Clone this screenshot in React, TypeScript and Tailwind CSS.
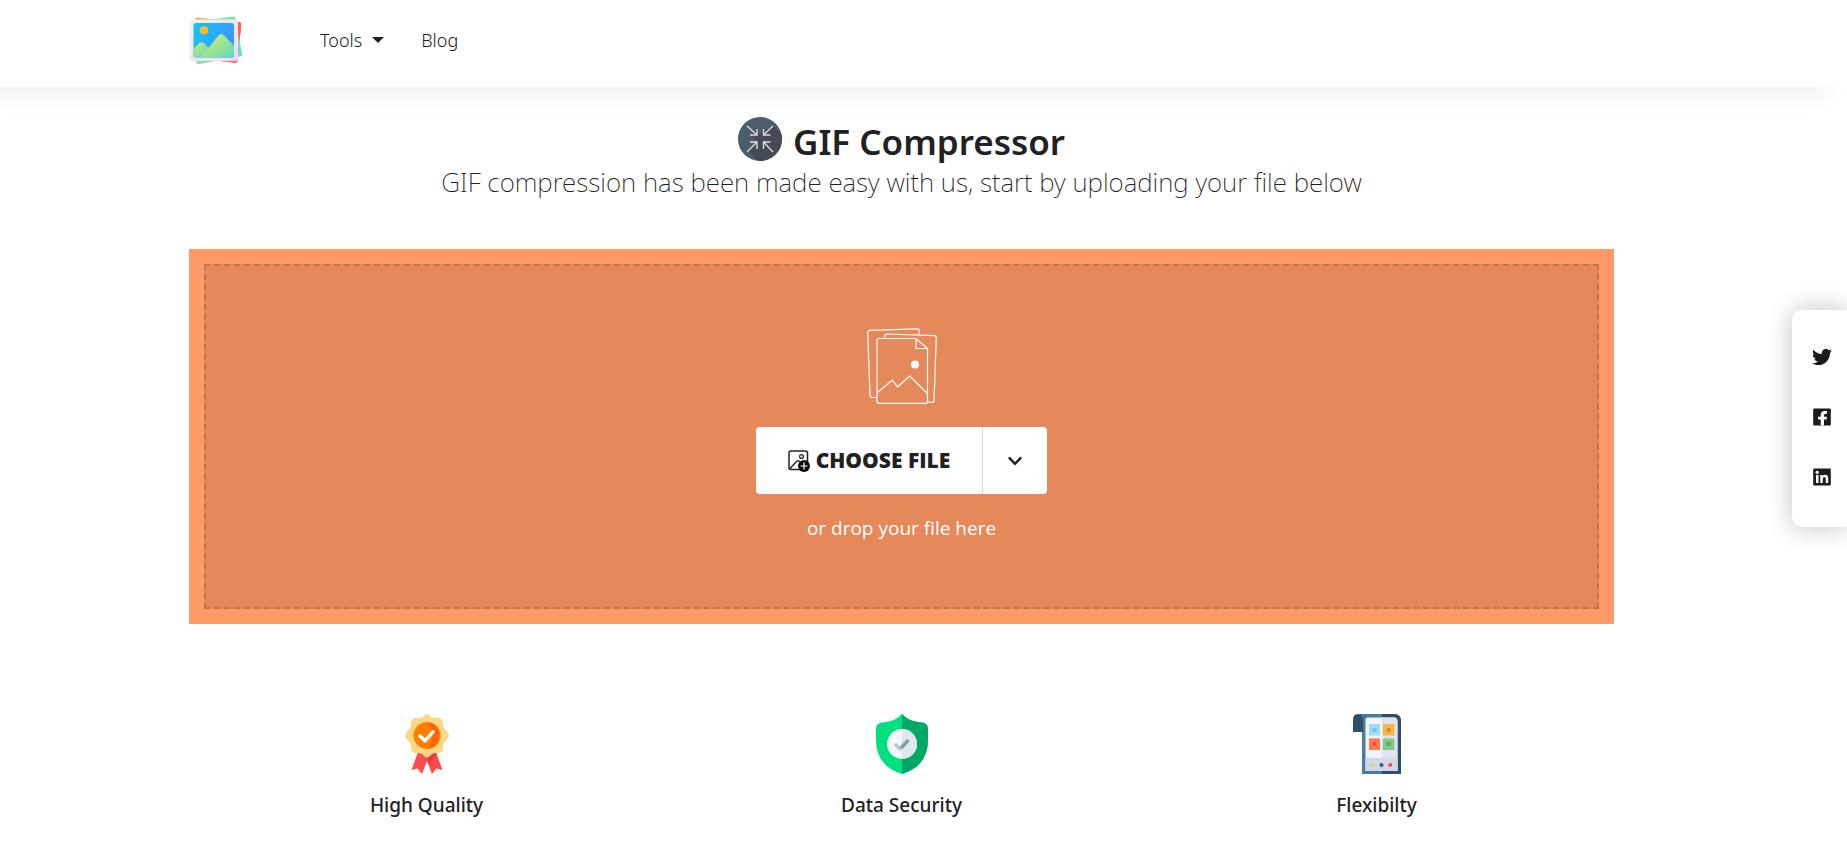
import { FaTwitter, FaChevronDown } from "react-icons/fa";

function Logo() {
  return (
    <svg viewBox="0 0 54 50" className="h-[50px] w-[54px]" aria-hidden="true">
      <defs>
        <linearGradient id="sky" x1="0" y1="0" x2="1" y2="0.4">
          <stop offset="0" stopColor="#12c6fb" />
          <stop offset="1" stopColor="#3a98fb" />
        </linearGradient>
        <linearGradient id="hill" x1="0" y1="0" x2="1" y2="1">
          <stop offset="0" stopColor="#d2ee60" />
          <stop offset="0.35" stopColor="#b4e880" />
          <stop offset="1" stopColor="#5cd8c4" />
        </linearGradient>
        <linearGradient id="frame" x1="0" y1="0" x2="1" y2="1">
          <stop offset="0" stopColor="#f1f3fb" />
          <stop offset="1" stopColor="#eed8f8" />
        </linearGradient>
        <linearGradient id="backRed" x1="0" y1="0" x2="1" y2="1">
          <stop offset="0" stopColor="#ffb13d" />
          <stop offset="0.6" stopColor="#f2693f" />
          <stop offset="1" stopColor="#ff5a5f" />
        </linearGradient>
        <linearGradient id="backGreen" x1="0" y1="0" x2="1" y2="1">
          <stop offset="0" stopColor="#a5e59b" />
          <stop offset="1" stopColor="#5cdcc4" />
        </linearGradient>
      </defs>
      <path d="M6.500 2.500 50.500 7q2 .3 1.800 2L48.500 46q-.4 2-2.400 1.800L5 42Z" fill="url(#backRed)" />
      <path d="M20 4.700 44 1.500q2-.3 2.400 1.700L53 39q.2 2-1.700 2.400L10 49q-2 .3-2.500-1.800L5 40Z" fill="url(#backGreen)" />
      <path d="M47.500 7 50.500 7.400q2 .3 1.800 2L50.500 27Z" fill="#fa6646" />
      <path d="m49 40-.6 6q-.4 2-2.400 1.800L24 45.500Z" fill="#ff6969" />
      <rect x="0.500" y="4.500" width="48.500" height="41.500" rx="3" fill="url(#frame)" />
      <rect x="4.500" y="8" width="40.500" height="34.500" rx="2.500" fill="url(#sky)" />
      <circle cx="15" cy="15.300" r="4.300" fill="#fdb72c" />
      <path d="M4.500 34q3-3 5-5.500 3-2.500 6 0l4.500 5-8.500 9H7Q4.500 42.500 4.500 40Z" fill="url(#hill)" opacity=".9" />
      <path d="M11.500 42.500 29.500 20.500q2.800-3 5.600 0l9.900 10.500v9q0 2.500-2.500 2.500Z" fill="url(#hill)" />
    </svg>
  );
}

function CompressIcon() {
  return (
    <svg viewBox="0 0 44 44" className="size-11" aria-hidden="true">
      <defs>
        <clipPath id="disc"><circle cx="22" cy="22" r="22" /></clipPath>
      </defs>
      <circle cx="22" cy="22" r="22" fill="#4c5c69" />
      <path clipPath="url(#disc)" d="M13 18 19 11 19 18 35 9 44 18V44H20L10 34 19 25Z" fill="#444b55" />
      <g fill="none" stroke="#d9dbdd" strokeWidth="1.400">
        <path d="m9 9 10 9m-7 0h7v-6M35 9l-9.500 9m0-6v6h7M9 35l10-10m-7 0h7v7M35 35l-9.500-10m7 0h-7v7" />
      </g>
    </svg>
  );
}

function PicturesIcon() {
  return (
    <svg viewBox="0 0 70 76" className="h-[76px] w-[70px]" fill="none" stroke="#fff" strokeWidth="1.200" strokeLinejoin="round" aria-hidden="true">
      <path d="M10 69.500H5q-1.900 0-2-2L.7 4.500Q.6 2.500 2.500 2.300L50 .8q2-.1 2 1.800v4" />
      <path d="M18 9.500V8q0-2 2-2l47.400 1.700q2 .1 1.900 2L67 72.500q-.1 2-2 1.900L60.500 74" />
      <path d="M49 10.500H12q-2 0-2 2V73q0 2.300 2 2.300h46.500q2 0 2-2V20.500Zm0 0v10h11.500" />
      <path d="m10 65 15.500-13 5 7L42.700 48 60.500 65.500" />
      <circle cx="48" cy="36.500" r="4" fill="#fff" stroke="none" />
    </svg>
  );
}

function AddImageIcon() {
  return (
    <svg viewBox="0 0 22 22" className="size-[22px]" fill="none" aria-hidden="true">
      <rect x="1" y="1" width="18.500" height="18.500" rx="2" stroke="#222" strokeWidth="1.500" />
      <circle cx="13.500" cy="6.500" r="1.900" stroke="#222" strokeWidth="1.300" />
      <path d="m1.500 19 7.500-8q1.500-1 3 1" stroke="#222" strokeWidth="1.500" />
      <circle cx="16" cy="16" r="6" fill="#0b0b0b" />
      <path d="M16 12.500v7M12.500 16h7" stroke="#fff" strokeWidth="1.200" />
    </svg>
  );
}

function MedalIcon() {
  return (
    <svg viewBox="0 0 60 60" className="size-[60px]" aria-hidden="true">
      <path d="M21 38 14.500 56l6-1.500 4.500 5.500 5-13V40Z" fill="#ff4b4b" />
      <path d="m39 38 6.500 18-6-1.500-4.500 5.500-5-13V40Z" fill="#ff4b4b" />
      <path d="M30 43.500q5-5 9.500-4.500l.5 1-8 10-2-4Z" fill="#ee373c" />
      <path d="M30 0q2.500 0 4 2.500Q35.500 4 37.500 3.800 42.500 3 45 6q1.500 2 1 5-.3 2 1.500 3.500Q52 19 52 21.500t-4.500 6.500q-2 1.500-1.500 4 .8 4.500-1.500 6t-6.500 1.200q-2.500-.3-4 1.800Q32 43.500 30 43.500T26 41q-1.500-2-4-1.800-4.500.6-6.500-1.200T14 32q.5-2.500-1.500-4Q8 24 8 21.500t4.500-7Q14.300 13 14 11q-.5-3 1-5 2.500-3 7.500-2.200Q24.500 4 26 2.500 27.500 0 30 0Z" fill="#fdd884" />
      <circle cx="30" cy="21.500" r="13.500" fill="#ff8000" />
      <path d="M31 8.200a13.500 13.500 0 0 1 0 26.600q9-13 0-26.600" fill="#ff6200" />
      <path d="m23 22 5 4.800 8-9" fill="none" stroke="#fff" strokeWidth="3.500" strokeLinecap="round" strokeLinejoin="round" />
    </svg>
  );
}

function ShieldIcon() {
  return (
    <svg viewBox="0 0 60 60" className="size-[60px]" aria-hidden="true">
      <path d="M30 0q6 7.500 19.500 8.500 6.500.5 6.500 6.500v11Q56 52 30 60 4 52 4 26V15q0-6 6.500-6.500Q24 7.500 30 0Z" fill="#00e07f" />
      <path d="M30 0q6 7.500 19.500 8.500 6.500.5 6.500 6.500v11Q56 52 30 60Z" fill="#00a963" />
      <circle cx="30" cy="30" r="15" fill="#f4f6fa" />
      <path d="M30 15a15 15 0 0 1 0 30Z" fill="#dfe7ef" />
      <path d="m24 31 4 4 7.500-8" fill="none" stroke="#b4cbd1" strokeWidth="3.500" strokeLinecap="round" strokeLinejoin="round" />
      <path d="m30 33 5.500-6" fill="none" stroke="#7ca5a9" strokeWidth="3.500" strokeLinecap="round" />
    </svg>
  );
}

function PhoneIcon() {
  return (
    <svg viewBox="0 0 60 60" className="size-[60px]" aria-hidden="true">
      <path d="M13 0h35q6 .5 6 7v53H15V5Z" fill="#4a7c9c" />
      <path d="M35 0h13q6 .5 6 7v53H35Z" fill="#2d5066" />
      <path d="M6 18V6q0-6 5-6t5 6v12Z" fill="#2d5066" />
      <path d="M20 3.500h27q3.500 0 3.500 4V57H18.500V5Z" fill="#f2f3fa" />
      <path d="M35 3.500h12q3.500 0 3.500 4V57H35Z" fill="#e0e2ef" />
      <path d="M18.500 44h32v13h-32Z" fill="#d5d7e6" />
      <path fill="#9bdcf4" d="M22 10h11v11.500H22z" />
      <path fill="#67c4f5" d="M25.500 14h4v4h-4z" />
      <path fill="#efba40" d="M36 10h11.500v11.500H36z" />
      <path fill="#e18b2e" d="M39.700 14h4v4h-4z" />
      <path fill="#ff7b4d" d="M22 24.500h11V36H22z" />
      <path fill="#ff4058" d="M25.500 28h4v4h-4z" />
      <path fill="#84c986" d="M36 24.500h11.500V36H36z" />
      <path fill="#5ba278" d="M39.700 28h4v4h-4z" />
      <circle cx="25.500" cy="51" r="2" fill="#c9e06c" />
      <circle cx="34.500" cy="51" r="2" fill="#365e78" />
      <circle cx="43.200" cy="51" r="2" fill="#f64762" />
    </svg>
  );
}

function FacebookIcon({ className }: { className?: string }) {
  return (
    <svg viewBox="0 0 20 20" className={className} aria-hidden="true">
      <rect x="1.200" y="1.500" width="17.600" height="17" rx="1" fill="currentColor" />
      <path d="M8.700 18.500V12.500H6V9.700h2.700V8q0-4 4-4H15v2.700h-1.500q-1.500 0-1.500 1.500v1.500h3l-.5 2.800H12v6Z" fill="#fff" />
    </svg>
  );
}

function LinkedInIcon({ className }: { className?: string }) {
  return (
    <svg viewBox="0 0 20 20" className={className} aria-hidden="true">
      <rect x="1.200" y="1.500" width="17.600" height="17" rx="1" fill="currentColor" />
      <circle cx="5.200" cy="5.300" r="1.600" fill="#fff" />
      <path d="M4 8h2.500v8H4ZM8.300 8h2.300v1.200Q11.500 7.800 13 7.800q3.200 0 3.200 3.400V16h-2.500v-4.300q0-1.700-1.400-1.700-1.500 0-1.500 1.800V16H8.300Z" fill="#fff" />
    </svg>
  );
}

const features = [
  { label: "High Quality", Icon: MedalIcon },
  { label: "Data Security", Icon: ShieldIcon },
  { label: "Flexibilty", Icon: PhoneIcon },
];

const socials = [
  { label: "Twitter", Icon: FaTwitter },
  { label: "Facebook", Icon: FacebookIcon },
  { label: "LinkedIn", Icon: LinkedInIcon },
];

export default function App() {
  return (
    <div className="bg-white font-['Noto_Sans','Open_Sans',sans-serif] text-[#212121]">
      <header className="pr-11 shadow-[-16px_6px_28px_rgba(0,0,0,0.06)]">
        <div className="mx-auto flex h-[87px] max-w-[1425px] items-start pt-[15px]">
          <a href="#" aria-label="Home"><Logo /></a>
          <nav className="ml-[77px] flex h-[50px] items-center gap-[37px] text-[18px] font-light">
            <button type="button" className="flex items-center gap-[10px]">
              Tools
              <span className="border-x-[6px] border-t-[6px] border-x-transparent border-t-[#212121]" />
            </button>
            <a href="#">Blog</a>
          </nav>
        </div>
      </header>

      <main className="pr-11">
        <div className="mx-auto max-w-[1425px]">
          <div className="pt-[30px] text-center">
            <h1 className="flex items-start justify-center gap-[11px] text-[35px] leading-[50px] font-semibold">
              <CompressIcon />
              GIF Compressor
            </h1>
            <p className="text-[26px] leading-[30px] font-extralight">
              GIF compression has been made easy with us, start by uploading your file below
            </p>
          </div>

          <section className="mt-[52px] bg-[#ff9966] p-[15px]">
            <div className="flex h-[345px] flex-col items-center border-2 border-dashed border-black/15 bg-black/10 pt-[62px]">
              <PicturesIcon />
              <div className="mt-[23px] flex h-[67px] overflow-hidden rounded bg-white">
                <button type="button" className="flex w-[226px] items-center justify-center gap-[6px] font-['Open_Sans',sans-serif] text-[21px] font-extrabold">
                  <AddImageIcon />
                  CHOOSE FILE
                </button>
                <button type="button" aria-label="More sources" className="flex w-[65px] items-center justify-center border-l border-[#d9d9d9]">
                  <FaChevronDown className="size-4" />
                </button>
              </div>
              <p className="mt-[20px] font-['Open_Sans',sans-serif] text-[19px] leading-7 text-white">or drop your file here</p>
            </div>
          </section>

          <section className="mt-[90px] grid grid-cols-3 pb-5">
            {features.map(({ label, Icon }) => (
              <div key={label} className="flex flex-col items-center">
                <Icon />
                <h2 className="mt-[17px] text-[19px] leading-7 font-medium">{label}</h2>
              </div>
            ))}
          </section>
        </div>
      </main>

      <aside className="fixed top-[310px] right-0 flex h-[217px] w-[55px] flex-col items-center justify-center gap-10 rounded-l-[10px] bg-white pb-1 pl-1 shadow-[0_0_24px_rgba(0,0,0,0.25)]">
        {socials.map(({ label, Icon }) => (
          <a key={label} href="#" aria-label={label} className="text-[#1b1b1b]">
            <Icon className="size-5" />
          </a>
        ))}
      </aside>
    </div>
  );
}
